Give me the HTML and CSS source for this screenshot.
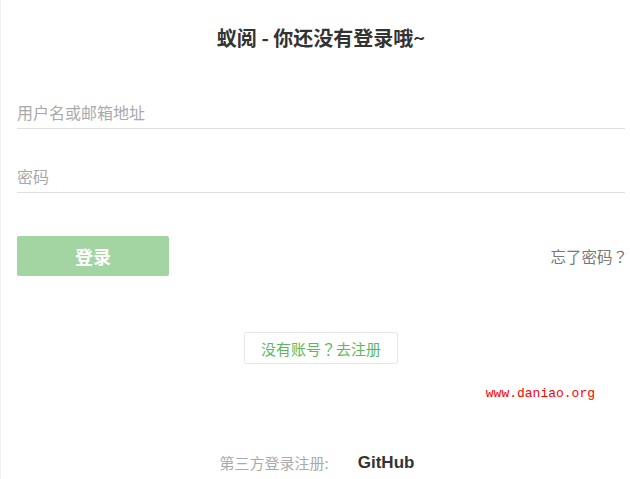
FILE: index.html
```html
<!DOCTYPE html>
<html lang="zh-CN">
<head>
<meta charset="utf-8">
<title>蚁阅 - 登录</title>
<link rel="stylesheet" href="styles.css">
</head>
<body>
<div class="page">
  <h1 class="title">蚁阅 - 你还没有登录哦~</h1>
  <form class="form">
    <div class="field"><input class="input" type="text" placeholder="用户名或邮箱地址"></div>
    <div class="field field-pw"><input class="input" type="password" placeholder="密码"></div>
    <div class="actions">
      <button class="btn-login" type="button">登录</button>
      <a class="forgot">忘了密码<span class="q">？</span></a>
    </div>
  </form>
  <div class="register-row"><a class="btn-register">没有账号<span class="q">？</span>去注册</a></div>
  <div class="watermark-row"><span class="watermark">www.daniao.org</span></div>
  <div class="third">
    <span class="third-label">第三方登录注册:</span>
    <a class="github">GitHub</a>
  </div>
</div>
</body>
</html>
```

FILE: styles.css
```css
html, body {
  margin: 0;
  padding: 0;
  background: #fff;
}
body {
  font-family: "Noto Sans CJK SC", "Noto Sans", sans-serif;
  color: #333;
  text-spacing-trim: space-all;
}
.page {
  border-left: 1px solid #f0f0f0;
  padding: 24px 5px 0 16px;
  height: 479px;
  box-sizing: border-box;
  overflow: hidden;
}
.title {
  margin: 0;
  font-size: 20px;
  line-height: 28px;
  font-weight: 700;
  text-align: center;
  color: #333;
}
.form {
  margin: 44px 0 0;
}
.field {
  height: 32px;
  border-bottom: 1px solid #e0e0e0;
  display: flex;
  align-items: center;
}
.field-pw {
  margin-top: 31px;
}
.input {
  border: none;
  outline: none;
  padding: 0;
  margin: 0;
  width: 100%;
  height: 32px;
  font-family: "Noto Sans CJK SC", "Noto Sans", sans-serif;
  font-size: 16px;
  color: #333;
  background: transparent;
}
.input::placeholder {
  color: #a9a9a9;
}
.actions {
  margin-top: 43px;
  display: flex;
  justify-content: space-between;
  align-items: center;
}
.btn-login {
  width: 152px;
  height: 40px;
  border: none;
  border-radius: 2px;
  background: #a3d5a3;
  color: #fff;
  font-family: "Noto Sans CJK SC", "Noto Sans", sans-serif;
  font-size: 18px;
  font-weight: 700;
  padding: 0;
}
.forgot {
  font-size: 15.5px;
  color: #777;
  margin-right: -3px;
  white-space: nowrap;
}
.q {
  font-family: "Noto Sans CJK TC", "Noto Sans CJK SC", sans-serif;
  display: inline-block;
  width: 1em;
  text-align: center;
}
.register-row {
  margin-top: 56px;
  display: flex;
  justify-content: center;
}
.btn-register {
  box-sizing: border-box;
  height: 32px;
  padding: 0 16px;
  border: 1px solid #e6e6e6;
  border-radius: 2px;
  display: flex;
  align-items: center;
  font-size: 15px;
  color: #5cb85c;
}
.watermark-row {
  margin-top: 20px;
  display: flex;
  justify-content: flex-end;
  padding-right: 30px;
}
.watermark {
  font-family: "Liberation Mono", "DejaVu Sans Mono", monospace;
  font-size: 13px;
  line-height: 20px;
  color: #ff0000;
}
.third {
  margin-top: 47px;
  padding-right: 8px;
  display: flex;
  justify-content: center;
  align-items: center;
  gap: 29px;
  line-height: 24px;
}
.third-label {
  font-size: 15px;
  color: #aaa;
}
.github {
  font-family: "Liberation Sans", Arial, sans-serif;
  font-size: 17px;
  font-weight: 700;
  color: #333;
}
```
